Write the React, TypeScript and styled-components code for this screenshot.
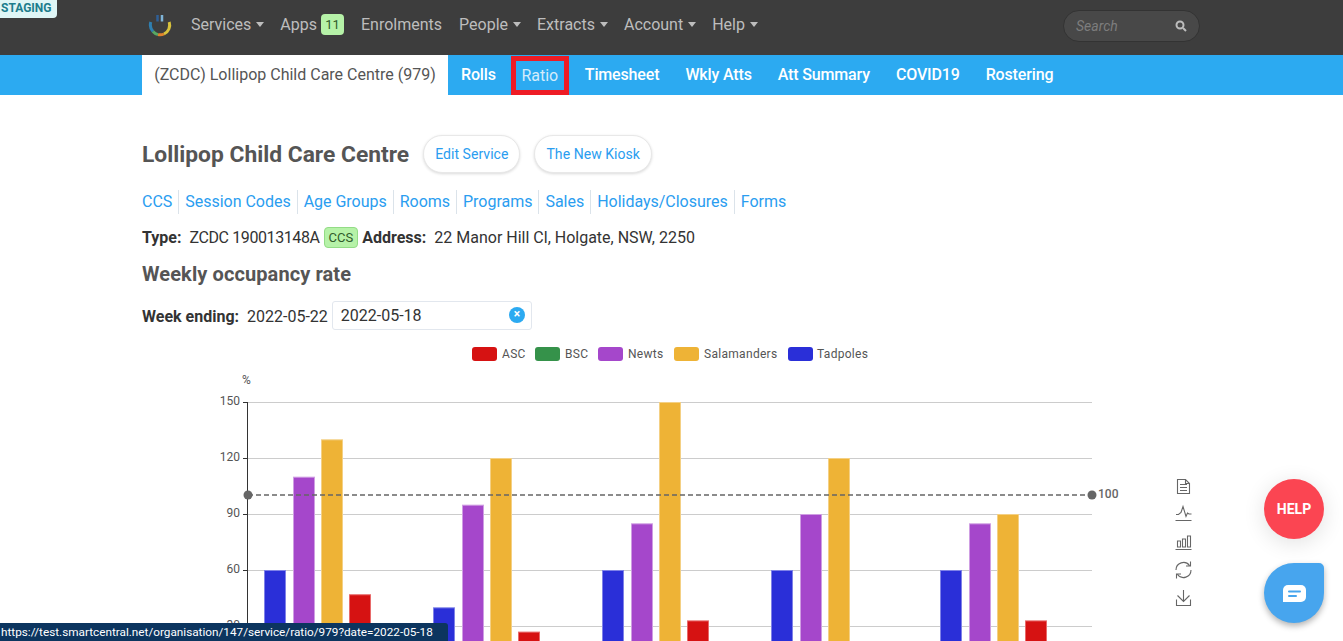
import React from "react";
import styled, { createGlobalStyle } from "styled-components";

const Global = createGlobalStyle`
  html, body { margin: 0; padding: 0; height: 641px; overflow: hidden; background: #fff; }
  body { font-family: Roboto, "Liberation Sans", sans-serif; color: #333; }
  * { box-sizing: border-box; }
`;

const Page = styled.div`
  width: 1343px;
  height: 641px;
  overflow: hidden;
  position: relative;
`;

const TopBar = styled.header`
  height: 55px;
  background: #3d3d3d;
  display: flex;
  align-items: center;
  padding: 0 143px 6px 148px;
`;

const Logo = styled.svg`
  width: 24px;
  height: 26px;
  margin-right: 19px;
  margin-top: 1px;
  flex: none;
`;

const MenuItem = styled.span<{ $gap?: number }>`
  display: inline-flex;
  align-items: center;
  font-size: 16px;
  color: #bdbdbd;
  margin-right: ${(p) => p.$gap ?? 16}px;
  white-space: nowrap;
`;

const Caret = styled.i`
  display: inline-block;
  width: 0;
  height: 0;
  margin-left: 5px;
  border-left: 4px solid transparent;
  border-right: 4px solid transparent;
  border-top: 5px solid #bdbdbd;
`;

const CountBadge = styled.span`
  display: inline-block;
  width: 23px;
  height: 21px;
  margin-left: 4px;
  background: #b6f2a8;
  border-radius: 4px;
  color: #2f5b2a;
  font-size: 13px;
  line-height: 21px;
  text-align: center;
`;

const SearchBox = styled.div`
  margin-left: auto;
  width: 137px;
  height: 32px;
  margin-top: 3px;
  border-radius: 16px;
  background: #484848;
  border: 1px solid #333;
  display: flex;
  align-items: center;
  justify-content: space-between;
  padding: 0 12px 0 12px;
  font-size: 14px;
  font-style: italic;
  color: #7d7d7d;
`;

const SubNav = styled.nav`
  height: 40px;
  background: #2caaf1;
  display: flex;
  align-items: stretch;
  padding-left: 142px;
`;

const ActiveTab = styled.span`
  width: 306px;
  background: #fff;
  color: #555;
  font-size: 16px;
  line-height: 39px;
  text-align: center;
`;

const SubTab = styled.span<{ $boxed?: boolean }>`
  display: flex;
  align-items: center;
  font-size: 16px;
  font-weight: 500;
  letter-spacing: -0.15px;
  color: #fff;
  white-space: nowrap;
  padding: 0 13px 2px;
  ${(p) =>
    p.$boxed
      ? `
    color: #d5ecfb;
    font-weight: 400;
    letter-spacing: 0;
    border: 5px solid #ee1c25;
    width: 58px;
    padding: 0 0 1px;
    justify-content: center;
    margin: 1px 3px 0 2px;
  `
      : ""}
`;

const Main = styled.main`
  padding: 40px 0 0 142px;
`;

const TitleRow = styled.div`
  display: flex;
  align-items: center;
  height: 38px;
`;

const Title = styled.h1`
  margin: 0 14px 0 0;
  font-size: 22.8px;
  font-weight: 700;
  color: #555;
  white-space: nowrap;
`;

const PillButton = styled.span`
  height: 38px;
  padding: 0 11px;
  margin-right: 14px;
  border-radius: 19px;
  background: #fff;
  border: 1px solid #e8e8e8;
  box-shadow: 0 1px 3px rgba(0, 0, 0, 0.15);
  color: #2a9df0;
  font-size: 14px;
  letter-spacing: 0.05px;
  line-height: 36px;
  white-space: nowrap;
`;

const LinkRow = styled.div`
  display: flex;
  align-items: center;
  height: 24px;
  margin-top: 17px;
`;

const LinkItem = styled.span`
  font-size: 16px;
  letter-spacing: -0.02px;
  line-height: 24px;
  color: #2a9df0;
  padding: 0 6px;
  border-left: 1px solid #dbe3ea;
  white-space: nowrap;
  &:first-child {
    padding-left: 0;
    border-left: 0;
  }
`;

const InfoRow = styled.div`
  display: flex;
  align-items: center;
  height: 24px;
  margin-top: 11px;
  font-size: 16px;
  color: #333;
  white-space: nowrap;
`;

const Label = styled.b`
  font-weight: 700;
  margin-right: 8px;
  font-size: 16px;
`;

const CondensedText = styled.span`
  letter-spacing: -0.4px;
`;

const CcsTag = styled.span`
  display: inline-block;
  height: 21px;
  margin: 0 4px 0 4px;
  padding: 0 4px;
  background: #b6f2a8;
  border: 1px solid #93dc86;
  border-radius: 4px;
  color: #2f5b2a;
  font-size: 13px;
  line-height: 19px;
`;

const SectionTitle = styled.h2`
  margin: 13px 0 0;
  font-size: 20px;
  letter-spacing: 0.1px;
  line-height: 24px;
  font-weight: 700;
  color: #555;
`;

const WeekRow = styled.div`
  display: flex;
  align-items: center;
  height: 30px;
  margin-top: 15px;
  font-size: 16px;
  color: #333;
  white-space: nowrap;
`;

const DateInput = styled.div`
  width: 200px;
  height: 29px;
  margin: 0 0 2px 4px;
  border: 1px solid #e2e7ee;
  border-radius: 3px;
  display: flex;
  align-items: center;
  justify-content: space-between;
  padding: 0 6px 0 8px;
`;

const ClearDot = styled.span`
  width: 16px;
  height: 16px;
  border-radius: 50%;
  background: #2caaf1;
  color: #fff;
  font-size: 12px;
  font-weight: 700;
  line-height: 15px;
  text-align: center;
`;

const ChartSvg = styled.svg`
  display: block;
  margin-top: 9px;
  font-family: Roboto, "Liberation Sans", sans-serif;
`;

const StagingBadge = styled.span`
  position: absolute;
  top: 0;
  left: 0;
  width: 57px;
  height: 18px;
  background: #dff6f6;
  border-radius: 0 0 4px 0;
  color: #1c7d8c;
  font-size: 12px;
  font-weight: 700;
  line-height: 16px;
  padding-left: 1px;
  white-space: nowrap;
`;

const StatusBar = styled.div`
  position: absolute;
  left: 0;
  bottom: 0;
  width: 448px;
  height: 18px;
  background: #0c355f;
  border-radius: 0 3px 0 0;
  color: #fff;
  font-family: Roboto, "Liberation Sans", sans-serif;
  font-size: 11.75px;
  line-height: 18px;
  padding-left: 1px;
  white-space: nowrap;
`;

const HelpFab = styled.span`
  position: absolute;
  left: 1264px;
  top: 479px;
  width: 60px;
  height: 60px;
  border-radius: 50%;
  background: #fb4552;
  box-shadow: 0 4px 22px rgba(0, 0, 0, 0.12);
  color: #fff;
  font-size: 14px;
  font-weight: 700;
  line-height: 60px;
  text-align: center;
`;

const ChatFab = styled.span`
  position: absolute;
  left: 1264px;
  top: 563px;
  width: 60px;
  height: 60px;
  border-radius: 50% 5px 50% 50%;
  background: #47a5ee;
  box-shadow: 0 3px 6px rgba(0, 0, 0, 0.3);
  display: flex;
  align-items: center;
  justify-content: center;
`;

const colors = { asc: "#d61212", bsc: "#35924a", newts: "#a547cb", sal: "#eeb336", tad: "#2a2fd8" };
const light = { asc: "#e86a6a", newts: "#cf9ee3", sal: "#f4d084", tad: "#7f82e8" };

const groups = [
  { x: 264, t: 60, n: 110, s: 130, a: 47 },
  { x: 433, t: 40, n: 95, s: 120, a: 27 },
  { x: 602, t: 60, n: 85, s: 150, a: 33 },
  { x: 771, t: 60, n: 90, s: 120, a: 0 },
  { x: 940, t: 60, n: 85, s: 90, a: 33 },
];

const yOf = (v: number) => 682 - v * (56 / 30);

const legend = [
  { x: 472, tx: 502, name: "ASC", c: colors.asc },
  { x: 535, tx: 565, name: "BSC", c: colors.bsc },
  { x: 598, tx: 628, name: "Newts", c: colors.newts },
  { x: 674, tx: 704, name: "Salamanders", c: colors.sal },
  { x: 788, tx: 817, name: "Tadpoles", c: colors.tad },
];

const Bar = ({ x, v, fill, stroke }: { x: number; v: number; fill: string; stroke: string }) =>
  v > 0 ? (
    <rect x={x + 0.5} y={yOf(v) + 0.5} width={21} height={700 - yOf(v)} fill={fill} stroke={stroke} strokeWidth={1} />
  ) : null;

const Chart = () => (
  <ChartSvg width={1058} height={301} viewBox="142 340 1058 301">
    {legend.map((l) => (
      <g key={l.name}>
        <rect x={l.x} y={347} width={25} height={14} rx={3} fill={l.c} />
        <text x={l.tx} y={358} fontSize={12} fill="#555" letterSpacing={0.3}>
          {l.name}
        </text>
      </g>
    ))}
    <text x={242} y={384} fontSize={12} fill="#555">%</text>
    {[150, 120, 90, 60, 30].map((v) => (
      <g key={v}>
        <line x1={248} x2={1092} y1={yOf(v) + 0.5} y2={yOf(v) + 0.5} stroke="#ccc" />
        <line x1={243} x2={248} y1={yOf(v) + 0.5} y2={yOf(v) + 0.5} stroke="#333" />
        <text x={240} y={yOf(v) + 3} fontSize={12} fill="#555" textAnchor="end">{v}</text>
      </g>
    ))}
    <line x1={247.5} x2={247.5} y1={402} y2={641} stroke="#333" />
    {groups.map((g) => (
      <g key={g.x}>
        <Bar x={g.x} v={g.t} fill={colors.tad} stroke={light.tad} />
        <Bar x={g.x + 29} v={g.n} fill={colors.newts} stroke={light.newts} />
        <Bar x={g.x + 57} v={g.s} fill={colors.sal} stroke={light.sal} />
        <Bar x={g.x + 85} v={g.a} fill={colors.asc} stroke={light.asc} />
      </g>
    ))}
    <line x1={248} x2={1092} y1={495} y2={495} stroke="#666" strokeWidth={1.4} strokeDasharray="5 3" />
    <circle cx={248} cy={495} r={4.5} fill="#666" />
    <circle cx={1092} cy={495} r={4.5} fill="#666" />
    <text x={1098} y={498} fontSize={12} fontWeight={500} fill="#666">100</text>
    <g fill="none" stroke="#666" strokeWidth={1.1}>
      <path d="M1177.500 479.500h8l4 4v10h-12zM1185.500 479.500v4h4M1180 484.500h7M1180 487.500h7M1180 490.500h7" />
      <path d="M1176 514.500h2.500l2.500-2 2-6 3 10 1.500-3.500 1.500 1h2.500M1175.500 520.500h16" />
      <path d="M1177.500 547v-6h3v6zM1182.500 547v-8h3v8zM1187.500 547v-11h3v11zM1175.500 549.500h16" />
      <path d="M1176 570a7.500 7.500 0 0 1 13.500-4.500M1191 570a7.500 7.500 0 0 1-13.500 4.500M1190.500 561.500v4.500h-4.500M1176.500 578.500v-4.500h4.500" />
      <path d="M1183.500 590v11.500M1177.500 595.500l6 6 6-6M1176.500 599.500v6h14v-6" />
    </g>
  </ChartSvg>
);

const menu = ["People", "Extracts", "Account", "Help"];
const subTabs = ["Timesheet", "Wkly Atts", "Att Summary", "COVID19", "Rostering"];
const links = ["CCS", "Session Codes", "Age Groups", "Rooms", "Programs", "Sales", "Holidays/Closures", "Forms"];

export default function App() {
  return (
    <Page>
      <Global />
      <TopBar>
        <Logo viewBox="0 0 24 26" fill="none" strokeWidth={3}>
          <path d="M2.800 10 A9.800 9.800 0 0 0 5 19.500" stroke="#2f7fb0" />
          <path d="M5 19.500 A9.800 9.800 0 0 0 10 22.600" stroke="#57a864" />
          <path d="M10 22.600 A9.800 9.800 0 0 0 16 22" stroke="#e0832c" />
          <path d="M16 22 A9.800 9.800 0 0 0 21.200 10" stroke="#d8c23c" />
          <path d="M9.500 3 V9.500" stroke="#2f5f96" strokeWidth={2.500} />
          <path d="M14 3 V9.500" stroke="#7fb4d8" strokeWidth={2.500} />
        </Logo>
        <MenuItem>Services<Caret /></MenuItem>
        <MenuItem $gap={17}>Apps<CountBadge>11</CountBadge></MenuItem>
        <MenuItem $gap={17}>Enrolments</MenuItem>
        {menu.map((m) => (
          <MenuItem key={m}>{m}<Caret /></MenuItem>
        ))}
        <SearchBox>
          Search
          <svg width="12" height="12" viewBox="0 0 12 12" fill="none" stroke="#bdbdbd" strokeWidth={2}>
            <circle cx="5" cy="5" r="3.500" />
            <path d="M8 8l3 3" />
          </svg>
        </SearchBox>
      </TopBar>
      <SubNav>
        <ActiveTab>(ZCDC) Lollipop Child Care Centre (979)</ActiveTab>
        <SubTab>Rolls</SubTab>
        <SubTab $boxed>Ratio</SubTab>
        {subTabs.map((t) => (
          <SubTab key={t}>{t}</SubTab>
        ))}
      </SubNav>
      <Main>
        <TitleRow>
          <Title>Lollipop Child Care Centre</Title>
          <PillButton>Edit Service</PillButton>
          <PillButton>The New Kiosk</PillButton>
        </TitleRow>
        <LinkRow>
          {links.map((l) => (
            <LinkItem key={l}>{l}</LinkItem>
          ))}
        </LinkRow>
        <InfoRow>
          <Label>Type:</Label>
          <CondensedText>ZCDC 190013148A</CondensedText>
          <CcsTag>CCS</CcsTag>
          <Label>Address:</Label>22 Manor Hill Cl, Holgate, NSW, 2250
        </InfoRow>
        <SectionTitle>Weekly occupancy rate</SectionTitle>
        <WeekRow>
          <Label>Week ending:</Label>2022-05-22
          <DateInput>
            2022-05-18
            <ClearDot>×</ClearDot>
          </DateInput>
        </WeekRow>
        <Chart />
      </Main>
      <StagingBadge>STAGING</StagingBadge>
      <StatusBar>https://test.smartcentral.net/organisation/147/service/ratio/979?date=2022-05-18</StatusBar>
      <HelpFab>HELP</HelpFab>
      <ChatFab>
        <svg width="23" height="17" viewBox="0 0 23 17">
          <path d="M5 0h13a5 5 0 0 1 5 5v7a5 5 0 0 1-5 5H0V5a5 5 0 0 1 5-5z" fill="#fff" />
          <rect x="5" y="5.500" width="13" height="2" rx="1" fill="#47a5ee" />
          <rect x="5" y="10" width="9" height="2" rx="1" fill="#47a5ee" />
        </svg>
      </ChatFab>
    </Page>
  );
}
